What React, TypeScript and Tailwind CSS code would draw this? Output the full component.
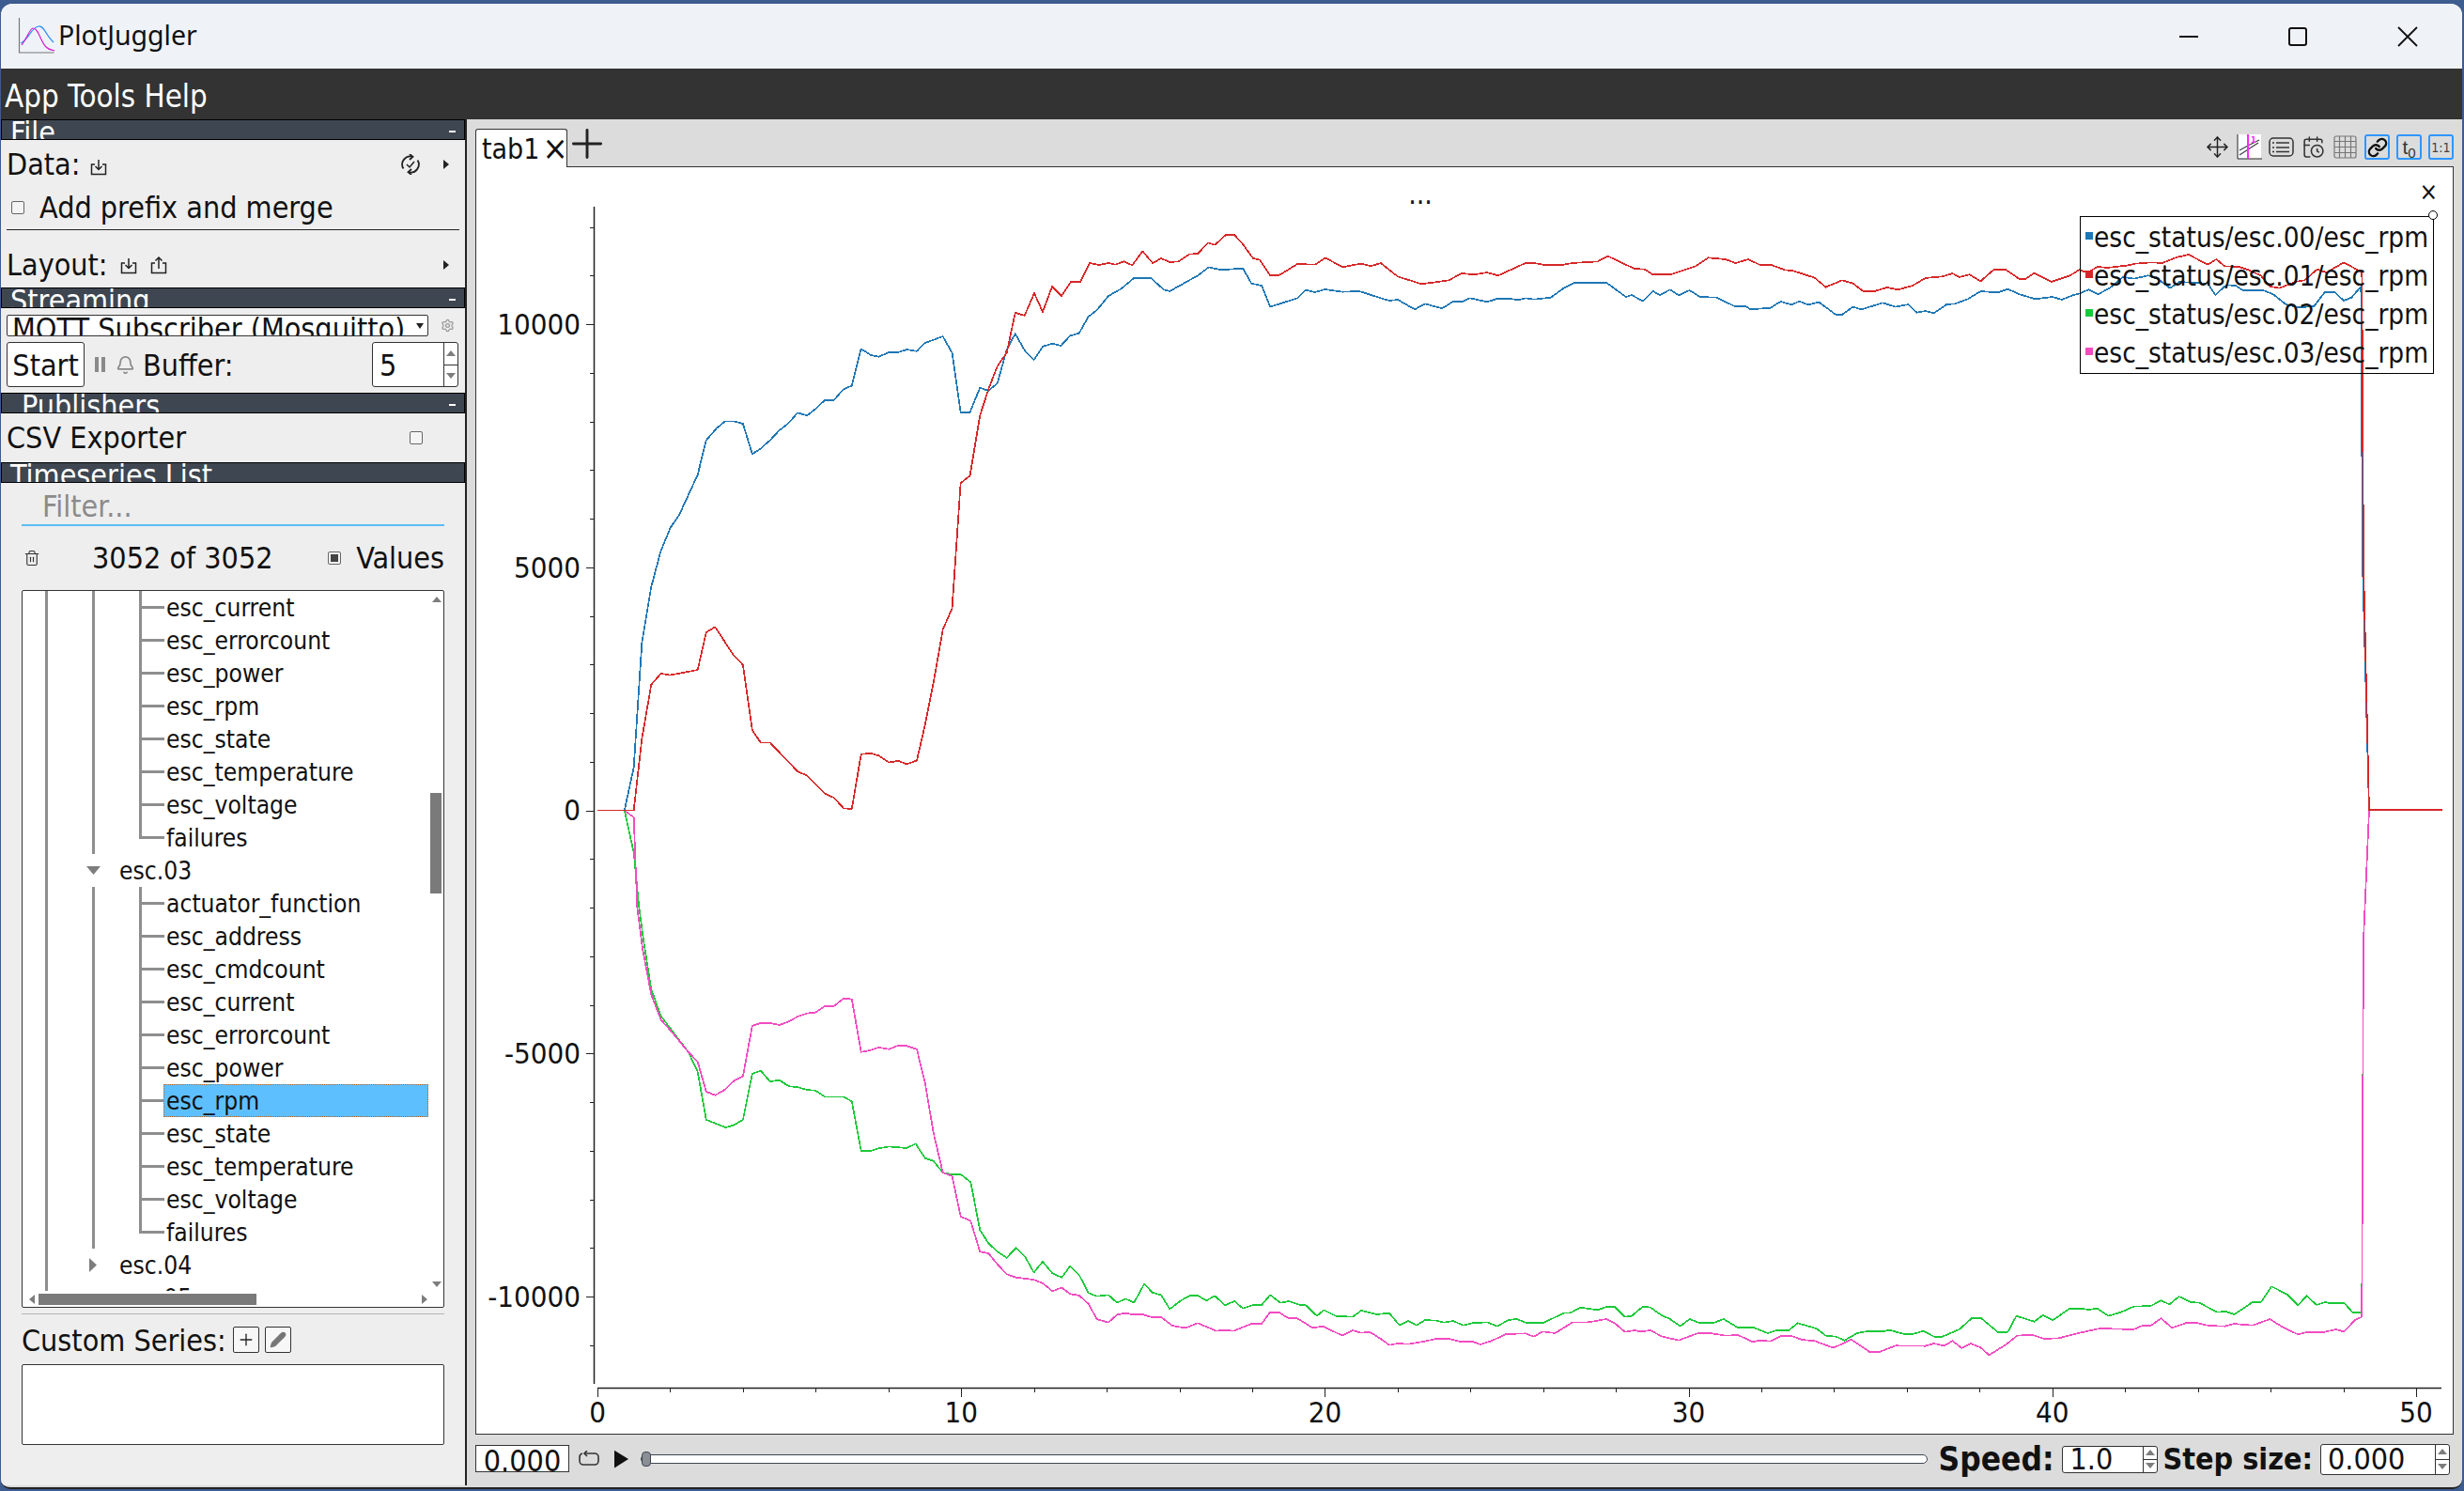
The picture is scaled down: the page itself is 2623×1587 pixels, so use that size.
import { Bell, CalendarClock, Link, Move, Pencil, Plus, Settings, Trash2 } from 'lucide-react';

type Pt = number[];

const z9 = (p: Pt[]) => p.map(([x, y]) => [630 + x / 2.529, 330 + y / 2.851]);
const z10 = (p: Pt[]) => p.map(([x, y]) => [630 + x / 2.529, 850 + y / 2.613]);
const z11 = (p: Pt[]) => p.map(([x, y]) => [1180 + x / 1.104, 230 + y / 3]);
const z12 = (p: Pt[]) => p.map(([x, y]) => [1180 + x / 1.104, 1340 + y / 3]);
const z4 = (p: Pt[]) => p.map(([x, y]) => [2150 + x / 3, y / 3]);

const BLUE = [
  ...z9([[15,1518],[88,1518],[113,1388],[135,1008],[160,840],[186,730],[212,660],[236,620],[285,500],[308,395],[335,360],[358,338],[383,338],[407,345],[432,437],[455,420],[480,395],[505,365],[528,345],[554,312],[580,320],[602,300],[628,273],[652,273],[678,240],[700,230],[725,118],[750,136],[772,142],[800,128],[825,128],[848,120],[875,125],[897,100],[945,80],[970,130],[993,310],[1018,310],[1045,236],[1068,245],[1092,222],[1117,120],[1140,72],[1165,122],[1190,152],[1215,110],[1240,102],[1263,108],[1288,78],[1312,70],[1337,20],[1360,0]]),
  ...z11([[0,255],[15,232],[30,198],[50,198],[65,235],[72,240],[95,205],[105,190],[118,163],[132,172],[158,167],[168,215],[180,222],[190,290],[222,262],[232,236],[242,243],[255,234],[275,242],[295,240],[320,262],[330,270],[340,267],[360,298],[372,280],[392,295],[405,273],[415,274],[425,262],[445,274],[458,263],[470,263],[482,268],[490,262],[500,266],[520,260],[535,230],[548,212],[585,212],[608,258],[615,252],[628,272],[640,240],[648,252],[660,235],[670,253],[683,237],[695,258],[715,260],[735,287],[748,287],[755,298],[778,293],[790,273],[803,283],[812,272],[822,283],[835,275],[855,315],[862,315],[875,290],[885,298],[910,277],[925,290],[940,282],[950,308],[960,303],[970,310],[985,282],[995,280],[1010,265],[1025,240],[1045,244],[1057,233]]),
  ...z4([[0,940],[50,955],[105,948],[135,957],[170,943],[190,938],[220,925],[250,940],[290,918],[330,885],[365,890],[410,880],[440,890],[480,920],[510,900],[600,905],[625,942],[660,910],[690,912],[715,928],[780,928],[810,940],[850,972],[890,982],[940,978],[975,932],[1005,932],[1035,960],[1060,950],[1090,915]]),
  [2515,600],[2522,862],[2600,862],
];

const RED = [
  ...z9([[15,1518],[113,1518],[135,1300],[160,1137],[186,1103],[210,1108],[285,1092],[308,978],[332,962],[382,1048],[407,1077],[432,1275],[455,1313],[480,1313],[554,1400],[580,1413],[628,1468],[652,1480],[678,1512],[700,1514],[725,1348],[750,1345],[772,1352],[800,1373],[825,1368],[848,1378],[875,1367],[897,1260],[920,1130],[945,970],[970,905],[993,525],[1018,503],[1045,320],[1068,240],[1092,170],[1117,130],[1140,8],[1165,17]]),
  [1101,312],[1110,332],[1120,305],[1130,315],[1140,300],[1150,300],[1160,280],[1170,282],
  ...z11([[0,150],[8,155],[18,145],[28,157],[40,112],[52,150],[62,135],[72,147],[82,145],[95,122],[105,120],[117,85],[125,92],[138,60],[148,60],[158,90],[170,135],[178,140],[190,190],[200,190],[222,153],[243,155],[255,133],[275,163],[290,155],[298,152],[308,160],[320,150],[340,193],[368,217],[400,205],[415,183],[430,187],[445,180],[458,190],[490,150],[500,150],[515,157],[535,155],[545,150],[575,145],[587,128],[618,168],[630,170],[640,187],[660,187],[690,160],[705,133],[725,138],[737,150],[752,138],[765,155],[780,157],[795,172],[805,175],[830,197],[843,227],[862,205],[875,215],[887,240],[900,240],[915,228],[928,235],[945,222],[960,198],[980,193],[992,183],[1000,195],[1012,187],[1025,208],[1040,172],[1055,172],[1070,200],[1078,200],[1088,182],[1108,210],[1130,190]]),
  ...z4([[190,862],[215,870],[250,852],[280,855],[340,848],[370,842],[420,838],[455,840],[500,822],[540,813],[600,845],[628,828],[655,850],[700,852],[730,862],[770,880],[800,915],[830,920],[880,900],[910,895],[950,860],[980,870],[1035,838],[1090,868],[1093,868]]),
  [2516,600],[2522,862],[2600,862],
];

const GREEN = [
  ...z10([[15,33],[88,33],[113,150],[127,300],[140,400],[160,530],[186,605],[212,640],[260,705],[285,760],[308,893],[332,903],[360,915],[383,908],[407,893],[432,765],[455,757],[480,787],[505,783],[530,800],[555,803],[580,810],[602,812],[628,830],[678,830],[700,842],[725,980],[750,980],[772,973],[800,968],[848,972],[872,960],[897,1000],[920,1008],[945,1040],[970,1046],[993,1045],[1020,1067],[1045,1200],[1068,1237],[1092,1260],[1117,1277],[1142,1250],[1167,1275],[1190,1318],[1214,1288],[1240,1320],[1265,1332],[1288,1300],[1312,1325],[1337,1375],[1360,1384]]),
  ...z12([[0,115],[10,140],[20,127],[30,140],[42,80],[52,108],[62,115],[72,160],[85,133],[95,118],[105,117],[115,133],[125,118],[137,148],[148,135],[158,158],[170,147],[180,147],[190,115],[202,140],[212,135],[225,147],[232,148],[245,182],[253,163],[267,182],[287,185],[297,165],[315,177],[330,173],[342,212],[352,198],[362,212],[372,195],[385,197],[395,203],[405,198],[417,212],[427,205],[445,202],[457,215],[470,195],[480,192],[490,203],[512,203],[535,173],[543,172],[555,155],[575,163],[585,153],[595,153],[607,185],[615,182],[628,152],[637,155],[650,180],[660,192],[672,215],[683,192],[695,205],[712,203],[723,192],[740,220],[757,218],[775,237],[785,228],[800,227],[810,205],[832,222],[843,245],[855,248],[865,260],[880,237],[890,232],[910,232],[918,227],[935,240],[945,240],[958,230],[970,248],[980,248],[1000,225],[1015,188],[1025,188],[1045,233],[1057,233],[1067,182],[1088,200],[1098,180],[1110,195],[1130,158],[1142,158],[1152,162],[1162,158],[1175,182],[1190,170],[1205,152],[1225,150],[1237,133],[1247,145],[1258,120],[1272,138],[1282,140],[1303,170],[1313,168],[1323,177],[1345,137],[1355,137],[1367,88],[1385,113],[1398,148],[1408,118],[1420,147],[1430,138],[1437,142],[1452,140],[1462,170],[1473,170]]),
  [2516,1000],[2522,862],[2600,862],
];

const PINK = [
  ...z10([[15,33],[88,33],[113,52],[122,300],[137,420],[160,545],[186,615],[212,645],[260,705],[285,732],[308,815],[332,825],[355,812],[383,785],[407,772],[432,632],[455,624],[480,624],[505,630],[530,620],[555,606],[580,597],[602,595],[628,577],[652,577],[678,556],[700,558],[725,705],[750,700],[772,692],[800,697],[825,687],[848,688],[875,697],[897,790],[920,930],[945,1040],[970,1050],[993,1162],[1020,1175],[1045,1260],[1068,1265],[1092,1295],[1117,1323],[1142,1332],[1190,1338],[1214,1348],[1240,1370],[1265,1360],[1288,1378],[1312,1382],[1337,1405],[1360,1448]]),
  ...z12([[0,203],[10,178],[20,173],[30,178],[40,177],[52,187],[62,186],[75,213],[85,218],[93,218],[105,205],[127,230],[135,227],[147,230],[168,207],[180,207],[190,170],[200,170],[212,190],[222,190],[240,220],[252,215],[275,245],[287,228],[297,236],[307,233],[320,255],[330,275],[340,270],[352,272],[372,263],[385,255],[400,255],[415,265],[427,263],[437,273],[450,262],[467,240],[490,238],[500,248],[510,232],[525,237],[545,203],[565,202],[585,192],[595,205],[607,233],[618,228],[625,232],[637,228],[650,247],[670,260],[692,238],[705,236],[725,245],[740,243],[757,265],[765,260],[778,263],[790,247],[802,245],[815,258],[830,262],[848,280],[853,283],[873,257],[895,298],[905,298],[925,277],[960,278],[970,270],[982,277],[992,262],[1003,285],[1013,270],[1025,283],[1035,307],[1055,273],[1068,245],[1085,242],[1100,255],[1117,253],[1140,237],[1165,222],[1205,225],[1215,213],[1225,213],[1237,190],[1250,220],[1267,204],[1280,205],[1293,213],[1312,215],[1323,207],[1335,210],[1345,212],[1365,192],[1380,218],[1398,241],[1410,233],[1430,233],[1442,225],[1452,232],[1465,195],[1473,185]]),
  [2516,1000],[2522,862],[2600,862],
];

const SERIES = [
  { pts: BLUE, color: '#1f77b4' },
  { pts: GREEN, color: '#1ac938' },
  { pts: PINK, color: '#f14cc1' },
  { pts: RED, color: '#d62728' },
];

const LEGEND = [
  { label: 'esc_status/esc.00/esc_rpm', color: '#1f77b4' },
  { label: 'esc_status/esc.01/esc_rpm', color: '#d62728' },
  { label: 'esc_status/esc.02/esc_rpm', color: '#1ac938' },
  { label: 'esc_status/esc.03/esc_rpm', color: '#f14cc1' },
];

const TREE: { label: string; kind: 'leaf' | 'last' | 'open' | 'closed'; active?: boolean }[] = [
  { label: 'esc_current', kind: 'leaf' },
  { label: 'esc_errorcount', kind: 'leaf' },
  { label: 'esc_power', kind: 'leaf' },
  { label: 'esc_rpm', kind: 'leaf' },
  { label: 'esc_state', kind: 'leaf' },
  { label: 'esc_temperature', kind: 'leaf' },
  { label: 'esc_voltage', kind: 'leaf' },
  { label: 'failures', kind: 'last' },
  { label: 'esc.03', kind: 'open' },
  { label: 'actuator_function', kind: 'leaf' },
  { label: 'esc_address', kind: 'leaf' },
  { label: 'esc_cmdcount', kind: 'leaf' },
  { label: 'esc_current', kind: 'leaf' },
  { label: 'esc_errorcount', kind: 'leaf' },
  { label: 'esc_power', kind: 'leaf' },
  { label: 'esc_rpm', kind: 'leaf', active: true },
  { label: 'esc_state', kind: 'leaf' },
  { label: 'esc_temperature', kind: 'leaf' },
  { label: 'esc_voltage', kind: 'leaf' },
  { label: 'failures', kind: 'last' },
  { label: 'esc.04', kind: 'closed' },
  { label: 'esc.05', kind: 'closed' },
];

function ImportIcon() {
  return (
    <svg width="18" height="18" viewBox="0 0 18 18" fill="none" stroke="#222" strokeWidth="1.5">
      <path d="M5 6H1.5v10.5h15V6H13" />
      <path d="M9 1v10M5.5 8L9 11.5 12.5 8" />
    </svg>
  );
}

function ExportIcon() {
  return (
    <svg width="18" height="20" viewBox="0 0 18 20" fill="none" stroke="#222" strokeWidth="1.5">
      <path d="M5 8H1.5v10.5h15V8H13" />
      <path d="M9 14V2M5.5 5.5L9 2l3.5 3.5" />
    </svg>
  );
}

function SyncIcon() {
  return (
    <svg width="22" height="22" viewBox="0 0 22 22" fill="none" stroke="#222" strokeWidth="1.8">
      <path d="M3.500 15.500A8.500 8.500 0 0 1 13 2.800" />
      <path d="M18.500 6.500A8.500 8.500 0 0 1 9 19.200" />
      <path d="M10 0l3.500 2.800L10 6M12 22l-3.500-2.800L12 16" />
      <path d="M7 11l3 3 5-6" strokeWidth="1.5" />
    </svg>
  );
}

function Arrow({ dir, big }: { dir: 'right' | 'left' | 'up' | 'down'; big?: boolean }) {
  const d = { right: 'M0 0L6 5 0 10Z', left: 'M6 0L0 5 6 10Z', up: 'M0 6L5 0 10 6Z', down: 'M0 0L5 6 10 0Z' }[dir];
  const horizontal = dir === 'right' || dir === 'left';
  const k = big ? 1.5 : 1;
  return (
    <svg
      width={(horizontal ? 6 : 10) * k * (big && horizontal ? 0.9 : 1)}
      height={(horizontal ? 10 : 6) * k}
      viewBox={horizontal ? '0 0 6 10' : '0 0 10 6'}
      preserveAspectRatio="none"
      fill="#7d7d7d"
    >
      <path d={d} />
    </svg>
  );
}

function DockTitle({ label, indent = 'pl-[9px]', dash = true }: { label: string; indent?: string; dash?: boolean }) {
  return (
    <div className={`h-[22px] shrink-0 bg-[#3e4651] border border-black overflow-hidden flex justify-between text-white text-[32px] leading-[36px] ${indent} pr-[9px]`}>
      <span className="-mt-[5px] whitespace-nowrap">{label}</span>
      {dash && <span className="w-[7px] h-[2px] bg-white mt-[11px]" />}
    </div>
  );
}

function Check({ checked }: { checked?: boolean }) {
  return (
    <span className="w-[14px] h-[14px] rounded-[2px] border border-[#666] bg-[#f4f4f4] flex items-center justify-center">
      {checked && <span className="w-[8px] h-[8px] bg-[#444]" />}
    </span>
  );
}

function SpinButtons() {
  return (
    <div className="w-[15px] h-full border-l border-[#333] flex flex-col shrink-0">
      <div className="flex-1 flex items-center justify-center border-b border-[#333]"><Arrow dir="up" /></div>
      <div className="flex-1 flex items-center justify-center"><Arrow dir="down" /></div>
    </div>
  );
}

function Guide({ mode }: { mode: 'full' | 'half' | 'none' }) {
  if (mode === 'none') return <div className="w-[50px] h-full shrink-0" />;
  return (
    <div className="w-[50px] h-full shrink-0 flex justify-center">
      <div className={`w-[3px] bg-[#8e8e8e] ${mode === 'full' ? 'h-full' : 'h-[19px]'}`} />
    </div>
  );
}

function TreeRow({ row }: { row: (typeof TREE)[number] }) {
  const branch = row.kind === 'open' || row.kind === 'closed';
  return (
    <div className="h-[35px] shrink-0 flex text-[26.200px] leading-[37px]">
      <Guide mode="full" />
      {branch ? (
        <div className="w-[50px] h-full shrink-0 flex items-center justify-center">
          <Arrow dir={row.kind === 'open' ? 'down' : 'right'} big />
        </div>
      ) : (
        <Guide mode="full" />
      )}
      {branch ? (
        <span className="pl-[3px] whitespace-nowrap">{row.label}</span>
      ) : (
        <>
          <div className="w-[50px] h-full shrink-0 relative">
            <Guide mode={row.kind === 'last' ? 'half' : 'full'} />
            <div className="absolute left-[25px] top-[16px] h-[3px] w-[26px] bg-[#8e8e8e]" />
          </div>
          <span className={`w-[282px] h-full pl-[3px] whitespace-nowrap ${row.active ? 'bg-[#5ebfff] outline-1 -outline-offset-1 outline-dotted outline-[#b5651d]' : ''}`}>
            {row.label}
          </span>
        </>
      )}
    </div>
  );
}

function ToolIcon({ active, children }: { active?: boolean; children: React.ReactNode }) {
  return (
    <div className={`w-[27px] h-[27px] flex items-center justify-center rounded-[3px] ${active ? 'border-2 border-[#2f96ff]' : ''}`}>
      {children}
    </div>
  );
}

function Plot() {
  const minorY = Array.from({ length: 25 }, (_, i) => 1380 + 51.74 - i * 51.74).filter((y) => y > 225);
  const ticksX = Array.from({ length: 26 }, (_, i) => 636 + i * 77.44);
  const labelsY = [
    { y: 345, t: '10000' },
    { y: 604, t: '5000' },
    { y: 862, t: '0' },
    { y: 1121, t: '-5000' },
    { y: 1380, t: '-10000' },
  ];
  return (
    <svg width="2105" height="1350" viewBox="506 177 2105 1350" className="absolute -left-[1px] -top-[1px]">
      <path d="M632.500 220V1473M636 1477.500H2599" stroke="#222" strokeWidth="1.500" fill="none" />
      {minorY.map((y, i) => {
        const major = i % 5 === 1;
        return <path key={y} d={`M${major ? 624 : 628} ${Math.round(y) + 0.5}H632`} stroke="#222" strokeWidth="1" />;
      })}
      {ticksX.map((x, i) => (
        <path key={x} d={`M${Math.round(x) + 0.5} 1477V${i % 5 === 0 ? 1487 : 1482}`} stroke="#222" strokeWidth="1" />
      ))}
      {SERIES.map((s) => (
        <polyline
          key={s.color}
          points={s.pts.map((p) => p.join(',')).join(' ')}
          fill="none"
          stroke={s.color}
          strokeWidth="1.700"
          strokeLinejoin="round"
          shapeRendering="crispEdges"
        />
      ))}
      {labelsY.map((l) => (
        <text key={l.t} x={618} y={l.y + 11} textAnchor="end" fontSize="31" fill="#111">{l.t}</text>
      ))}
      {[0, 10, 20, 30, 40, 50].map((v) => (
        <text key={v} x={636 + v * 38.72} y={1514} textAnchor="middle" fontSize="31" fill="#111">{v}</text>
      ))}
      <text x={1512} y={217} textAnchor="middle" fontSize="30" fill="#111">...</text>
    </svg>
  );
}

export default function App() {
  return (
    <div className="w-[2623px] h-[1587px] bg-[#3d5c90] overflow-hidden font-['DejaVu_Sans_Condensed','DejaVu_Sans',sans-serif] text-[#111]">
      <div className="w-[2620px] h-[1585px] ml-[1px] pt-[4px]">
        <div className="w-full h-[1581px] rounded-t-[12px] rounded-b-[10px] overflow-hidden flex flex-col border-b-2 border-[#222] bg-[#dcdcdc]">
          {/* title bar */}
          <div className="h-[69px] shrink-0 bg-[#eff3f8] flex items-center">
            <svg width="40" height="40" viewBox="0 0 40 40" fill="none" className="ml-[18px] mt-[-2px]">
              <path d="M1.500 1v37h37" stroke="#777" strokeWidth="1.200" />
              <path d="M3 28C12 24 14 11 22 10c6-1 8 10 16 17" stroke="#2f8fff" strokeWidth="1.200" />
              <path d="M4 30C10 22 13 12 16 12c6 0 8 14 14 20 3 3 6 3 9 4" stroke="#d61fd0" strokeWidth="1.200" />
            </svg>
            <span className="ml-[3px] text-[28.500px] font-['Noto_Sans',sans-serif] text-[#111] -mt-[2px]">PlotJuggler</span>
            <div className="flex-1" />
            <div className="w-[20px] h-[2px] bg-[#111] mr-[96px]" />
            <div className="w-[20px] h-[20px] border-2 border-[#111] rounded-[3px] mr-[96px]" />
            <svg width="22" height="22" viewBox="0 0 22 22" stroke="#111" strokeWidth="1.800" className="mr-[47px]">
              <path d="M1 1l20 20M21 1L1 21" />
            </svg>
          </div>
          {/* menu bar */}
          <div className="h-[54px] shrink-0 bg-[#333] text-white text-[32.800px] leading-[34px] pl-[4px] pt-[13px] whitespace-nowrap">App Tools Help</div>

          <div className="flex-1 flex min-h-0">
            {/* left dock */}
            <div className="w-[496px] shrink-0 bg-[#eee] flex flex-col border-r-2 border-[#222] text-[32px] leading-[36px] mb-[2px]">
              <DockTitle label="File" />
              <div className="h-[52px] shrink-0 flex items-center pl-[6px] pr-[17px]">
                <span>Data:</span>
                <span className="ml-[11px] mt-[6px]"><ImportIcon /></span>
                <div className="flex-1" />
                <SyncIcon />
                <span className="ml-[24px]"><svg width="6" height="10" viewBox="0 0 6 10" fill="#222"><path d="M0 0L6 5 0 10Z" /></svg></span>
              </div>
              <div className="h-[40px] shrink-0 flex items-center pl-[11px]">
                <Check />
                <span className="ml-[16px] whitespace-nowrap">Add prefix and merge</span>
              </div>
              <div className="h-[1px] shrink-0 mt-[3px] mx-[6px] bg-[#222]" />
              <div className="h-[61px] shrink-0 flex items-center pt-[12px] pl-[6px] pr-[17px]">
                <span>Layout:</span>
                <span className="ml-[13px] mt-[2px]"><ImportIcon /></span>
                <span className="ml-[14px]"><ExportIcon /></span>
                <div className="flex-1" />
                <svg width="6" height="10" viewBox="0 0 6 10" fill="#222"><path d="M0 0L6 5 0 10Z" /></svg>
              </div>
              <DockTitle label="Streaming" />
              <div className="mt-[7px] ml-[6px] flex items-center shrink-0">
                <div className="w-[449px] h-[23px] bg-white border border-[#333] rounded-[2px] overflow-hidden flex justify-between pl-[5px]">
                  <span className="-mt-[4px] leading-[36px] whitespace-nowrap">MQTT Subscriber (Mosquitto)</span>
                  <span className="mt-[8px] mr-[4px]"><svg width="8" height="6" viewBox="0 0 8 6" fill="#222"><path d="M0 0h8L4 6z" /></svg></span>
                </div>
                <Settings size={15} color="#999" className="ml-[13px]" />
              </div>
              <div className="mt-[6px] ml-[6px] mr-[7px] h-[48px] flex items-center shrink-0">
                <div className="w-[83px] h-full bg-white border border-[#333] rounded-[3px] flex items-center justify-center pt-[2px]">Start</div>
                <div className="ml-[11px] flex gap-[3px]">
                  <span className="w-[4px] h-[16px] bg-[#8a8a8a]" />
                  <span className="w-[4px] h-[16px] bg-[#8a8a8a]" />
                </div>
                <Bell size={21} color="#8a8a8a" className="ml-[11px]" />
                <span className="ml-[8px] pt-[2px]">Buffer:</span>
                <div className="flex-1" />
                <div className="w-[92px] h-full bg-white border border-[#333] rounded-[3px] flex items-center overflow-hidden">
                  <span className="flex-1 pl-[7px] pt-[2px]">5</span>
                  <SpinButtons />
                </div>
              </div>
              <div className="mt-[6px] shrink-0"><DockTitle label="Publishers" indent="pl-[21px]" /></div>
              <div className="h-[52px] shrink-0 flex items-center pl-[6px]">
                <span>CSV Exporter</span>
                <div className="flex-1" />
                <span className="mr-[45px]"><Check /></span>
              </div>
              <DockTitle label="Timeseries List" dash={false} />
              <div className="mx-[22px] h-[46px] shrink-0 border-b-2 border-[#5cbcf6] pl-[22px] pt-[7px] text-[#8b8b8b]">Filter...</div>
              <div className="h-[68px] shrink-0 mx-[22px] flex items-center">
                <Trash2 size={18} color="#333" strokeWidth={1.500} className="ml-[2px]" />
                <span className="ml-[55px] whitespace-nowrap">3052 of 3052</span>
                <div className="flex-1" />
                <Check checked />
                <span className="ml-[16px]">Values</span>
              </div>
              {/* tree */}
              <div className="relative mx-[22px] h-[764px] shrink-0 bg-white border border-[#333] rounded-[2px] overflow-hidden flex flex-col">
                <div className="h-[745px] overflow-hidden flex flex-col">
                  {TREE.map((row, i) => (
                    <TreeRow key={i} row={row} />
                  ))}
                </div>
                <div className="flex-1 flex items-center pl-[7px] pr-[17px]">
                  <Arrow dir="left" />
                  <div className="ml-[4px] w-[232px] h-[12px] bg-[#7a7a7a]" />
                  <div className="flex-1" />
                  <Arrow dir="right" />
                </div>
                <div className="absolute right-[2px] top-[6px]"><Arrow dir="up" /></div>
                <div className="absolute right-[2px] top-[735px]"><Arrow dir="down" /></div>
                <div className="absolute right-[2px] top-[215px] w-[12px] h-[107px] bg-[#7a7a7a]" />
              </div>
              <div className="mx-[22px] mt-[6px] h-[1px] shrink-0 bg-[#b4b4b4]" />
              <div className="mx-[22px] mt-[13px] h-[28px] shrink-0 flex items-center">
                <span className="w-[225px] pt-[2px] whitespace-nowrap">Custom Series:</span>
                <div className="w-[28px] h-[28px] border border-[#333] rounded-[2px] bg-[#f7f7f7] flex items-center justify-center">
                  <Plus size={20} color="#222" strokeWidth={1.600} />
                </div>
                <div className="ml-[6px] w-[28px] h-[28px] border border-[#333] rounded-[2px] bg-[#f7f7f7] flex items-center justify-center">
                  <Pencil size={18} color="#777" fill="#777" />
                </div>
              </div>
              <div className="mx-[22px] mt-[12px] h-[86px] shrink-0 bg-white border border-[#333] rounded-[2px]" />
            </div>

            {/* right pane */}
            <div className="flex-1 flex flex-col pl-[9px] pr-[9px] min-w-0">
              <div className="h-[50px] shrink-0 flex items-end">
                <div className="w-[98px] h-[41px] -mb-[1px] z-10 bg-white border border-b-0 border-[#333] rounded-t-[3px] pl-[6px] flex items-center text-[30px] whitespace-nowrap">
                  tab1<span className="ml-[3px] text-[36px] leading-none">×</span>
                </div>
                <div className="-ml-[4px] -mb-[1px] mr-auto">
                  <Plus size={50} color="#222" strokeWidth={1.400} />
                </div>
                <div className="flex gap-[7px] mb-[7px] items-center">
                  <ToolIcon><Move size={25} color="#222" strokeWidth={1.400} /></ToolIcon>
                  <ToolIcon>
                    <svg width="27" height="27" viewBox="0 0 27 27" fill="none">
                      <rect x="1" y="0" width="25" height="26" fill="#fff" />
                      <path d="M1 0v26h26" stroke="#222" strokeWidth="1" />
                      <path d="M3 22l20-13M3 17l9-5 12-6" stroke="#444" strokeWidth="1.300" />
                      <path d="M12 0v26" stroke="#ff27ff" strokeWidth="2" />
                      <text x="15" y="9" fontSize="9" fontWeight="700" fill="#ff27ff">1</text>
                    </svg>
                  </ToolIcon>
                  <ToolIcon>
                    <svg width="27" height="22" viewBox="0 0 27 22" fill="none" stroke="#333" strokeWidth="1.500">
                      <rect x="1" y="1" width="25" height="19" rx="4" />
                      <path d="M8 6h14M8 11h14M8 15.500h14M4 6h2M4 11h2M4 15.500h2" />
                    </svg>
                  </ToolIcon>
                  <ToolIcon><CalendarClock size={25} color="#333" strokeWidth={1.500} /></ToolIcon>
                  <ToolIcon>
                    <svg width="25" height="25" viewBox="0 0 25 25" fill="none" stroke="#777" strokeWidth="1.200">
                      <rect x="1" y="1" width="23" height="23" rx="2" />
                      <path d="M1 6.500h23M1 12.500h23M1 18.500h23M6.500 1v23M12.500 1v23M18.500 1v23" />
                    </svg>
                  </ToolIcon>
                  <ToolIcon active><Link size={22} color="#111" strokeWidth={2.600} /></ToolIcon>
                  <ToolIcon active>
                    <span className="text-[21px] leading-none text-[#333] font-['Liberation_Sans',sans-serif]">t<sub className="text-[15px]">0</sub></span>
                  </ToolIcon>
                  <ToolIcon active><span className="text-[14px] leading-none text-[#444]">1:1</span></ToolIcon>
                </div>
              </div>
              {/* plot */}
              <div className="relative h-[1350px] shrink-0 bg-white border border-[#333] overflow-hidden">
                <Plot />
                <span className="absolute right-[16px] top-[16px] text-[26px] leading-[20px]">×</span>
                <div className="absolute left-[1707px] top-[52px] w-[377px] h-[168px] border border-black pt-[2px] pl-[5px] flex flex-col">
                  {LEGEND.map((l) => (
                    <div key={l.label} className="h-[41px] flex items-center text-[29.500px] whitespace-nowrap">
                      <span className="w-[8px] h-[8px] mr-[1px] -mt-[5px]" style={{ backgroundColor: l.color }} />
                      {l.label}
                    </div>
                  ))}
                </div>
                <span className="absolute left-[2078px] top-[46px] w-[10px] h-[10px] rounded-full bg-white border border-black" />
              </div>
              {/* player bar */}
              <div className="flex-1 flex items-center pb-[4px] text-[32px] whitespace-nowrap">
                <div className="w-[100px] h-[29px] shrink-0 bg-white border border-[#333] overflow-hidden leading-[32px] text-center -mt-[1px]">0.000</div>
                <svg width="24" height="18" viewBox="0 0 24 18" fill="none" stroke="#333" strokeWidth="1.600" className="ml-[9px] shrink-0">
                  <path d="M7 3H18a4 4 0 0 1 4 4v4a4 4 0 0 1-4 4H6a4 4 0 0 1-4-4V7a4 4 0 0 1 3-4" />
                  <path d="M10 0L7 3l3 3" />
                </svg>
                <svg width="15" height="20" viewBox="0 0 16 20" fill="#111" className="ml-[15px] shrink-0"><path d="M0 0l16 10L0 20z" /></svg>
                <div className="relative flex-1 ml-[13px] h-[10px] bg-white border border-[#3e4651] rounded-[5px]">
                  <span className="absolute left-0 -top-[4px] w-[10px] h-[16px] rounded-[4px] bg-[#8a8f96] border border-[#3e4651]" />
                </div>
                <b className="ml-[11px] text-[35px]">Speed:</b>
                <div className="ml-[8px] w-[102px] h-[29px] shrink-0 bg-white border border-[#333] rounded-[3px] flex items-center overflow-hidden leading-[34px]">
                  <span className="flex-1 pl-[8px]">1.0</span>
                  <SpinButtons />
                </div>
                <b className="ml-[6px] text-[32px]">Step size:</b>
                <div className="ml-[8px] w-[138px] h-[33px] shrink-0 bg-white border border-[#333] rounded-[3px] flex items-center overflow-hidden leading-[34px]">
                  <span className="flex-1 pl-[7px]">0.000</span>
                  <SpinButtons />
                </div>
                <span className="w-[4px] shrink-0" />
              </div>
            </div>
          </div>
        </div>
      </div>
    </div>
  );
}
